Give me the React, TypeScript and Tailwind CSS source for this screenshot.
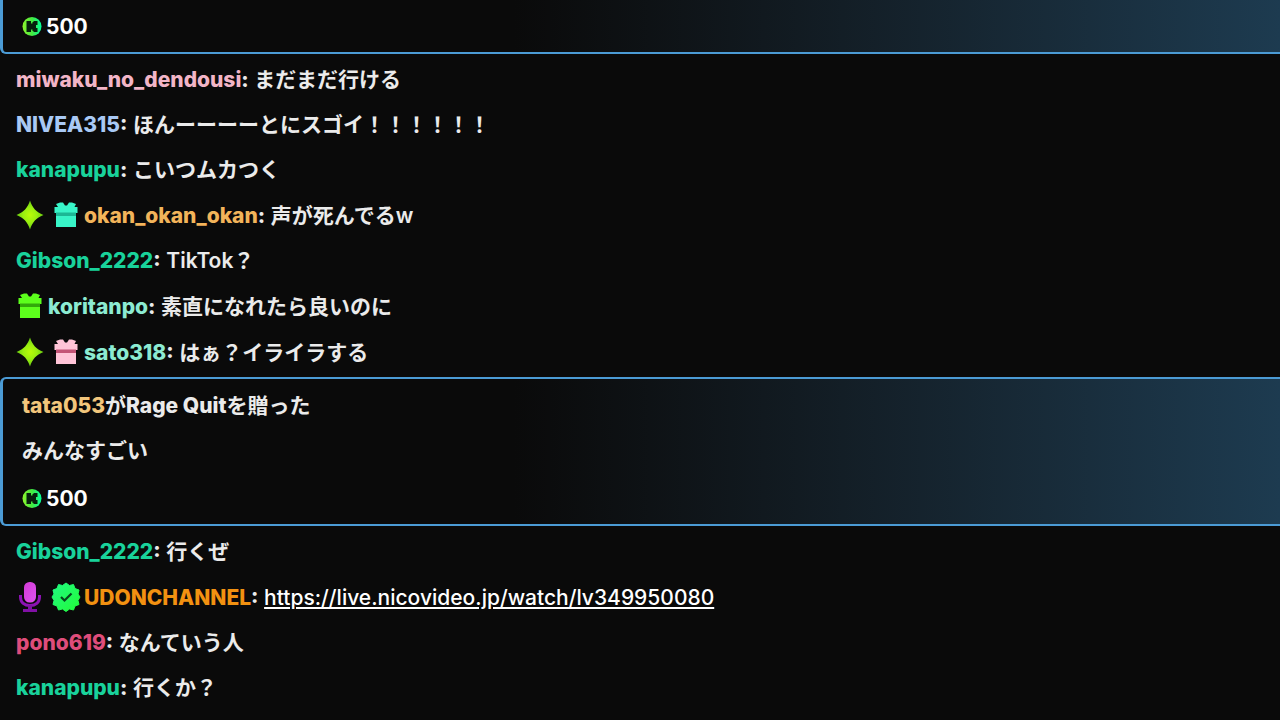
import type { ReactNode } from "react";

const FONT = "font-['Inter','Noto_Sans_CJK_JP',sans-serif]";

function Sparkle() {
  return (
    <svg viewBox="0 0 28 30" className="h-[30px] w-7 shrink-0" aria-hidden="true">
      <defs>
        <radialGradient id="sparkle">
          <stop offset="0" stopColor="#b9fb08" />
          <stop offset="0.5" stopColor="#9aee10" />
          <stop offset="1" stopColor="#66cc10" />
        </radialGradient>
      </defs>
      <path
        d="M14 0.5 C16.500 8 20 12 27.500 15 C20 18 16.500 22 14 29.500 C11.500 22 8 18 0.5 15 C8 12 11.500 8 14 0.5Z"
        fill="url(#sparkle)"
      />
    </svg>
  );
}

function Gift({ color, band }: { color: string; band: string }) {
  return (
    <svg viewBox="0 0 28 28" className="size-7 shrink-0" aria-hidden="true">
      <path d="M4 3 L8 1.500 H11 L13 4.500 H15 L17 1.500 H20 L24 3 L22.500 6 H25.500 V12 H2.500 V6 H6Z" fill={color} />
      <path d="M4 11.500 H24 V15 H4Z" fill={band} />
      <path d="M4 15 H24 V26 H4Z" fill={color} />
    </svg>
  );
}

function Mic() {
  return (
    <svg viewBox="0 0 28 32" className="h-8 w-7 shrink-0" aria-hidden="true">
      <defs>
        <linearGradient id="mic" x1="0" y1="0" x2="1" y2="1">
          <stop offset="0" stopColor="#d23bd6" />
          <stop offset="1" stopColor="#e052f0" />
        </linearGradient>
      </defs>
      <path d="M4.500 14 V16 C4.500 21.500 8.500 24.500 14 24.500 S23.500 21.500 23.500 16 V14" fill="none" stroke="#8d12b4" strokeWidth="3" />
      <path d="M12 24 H16 V28 H21 V31 H7 V28 H12Z" fill="#8110a5" />
      <rect x="8" y="1" width="12" height="20.500" rx="5.500" fill="url(#mic)" />
    </svg>
  );
}

function Verified() {
  return (
    <svg viewBox="0 0 30 30" className="-mx-px size-[30px] shrink-0" aria-hidden="true">
      <defs>
        <linearGradient id="verified" x1="0" y1="0" x2="1" y2="1">
          <stop offset="0" stopColor="#20fa83" />
          <stop offset="1" stopColor="#22fb37" />
        </linearGradient>
      </defs>
      <path
        d="M15 1 L18.500 3.500 L22.500 2.500 L24 6.500 L28 8 L27 12 L29 15 L27 18.500 L28 22.500 L24 24 L22.500 28 L18.500 27 L15 29.500 L11.500 27 L7.500 28 L6 24 L2 22.500 L3 18.500 L1 15 L3 12 L2 8 L6 6.500 L7.500 2.500 L11.500 3.500Z"
        fill="url(#verified)"
        stroke="url(#verified)"
        strokeLinejoin="round"
      />
      <path d="M10 15 L13.500 18.500 L20.500 11.500" fill="none" stroke="#06451d" strokeWidth="2.200" />
    </svg>
  );
}

function Coin() {
  return (
    <svg viewBox="0 0 20 20" className="size-5 shrink-0" aria-hidden="true">
      <defs>
        <linearGradient id="coin">
          <stop offset="0" stopColor="#8df52c" />
          <stop offset="0.5" stopColor="#45e941" />
          <stop offset="1" stopColor="#00ff9b" />
        </linearGradient>
      </defs>
      <circle cx="10" cy="9.500" r="9.500" fill="url(#coin)" />
      <path
        d="M4.500 4 H9 V6.500 H10.500 V5 H11.500 V4 H15.500 V8 H14 V11 H15.500 V15 H11.500 V14 H10.500 V12.500 H9 V15 H4.500Z"
        fill="#06200d"
      />
    </svg>
  );
}

interface MessageProps {
  name: string;
  color: string;
  badges?: ReactNode;
  children: ReactNode;
}

function Message({ name, color, badges, children }: MessageProps) {
  return (
    <li className={`flex items-center px-4 ${badges ? "min-h-[46px]" : "min-h-[45px]"}`}>
      {badges && <span className="mr-1 flex items-center gap-2">{badges}</span>}
      <p>
        <strong className={`font-extrabold ${color}`}>{name}</strong>
        <span className="mr-px font-extrabold">: </span>
        {children}
      </p>
    </li>
  );
}

function Amount({ value }: { value: number }) {
  return (
    <p className="flex items-center gap-1 font-bold text-white">
      <Coin />
      {value}
    </p>
  );
}

const CARD = "border-l-[3px] border-[#4b9bd5] bg-linear-to-r from-[#0a0a0a] from-40% to-[#1d3b50] px-[19px]";

export default function App() {
  return (
    <main
      className={`h-screen overflow-hidden bg-[#0a0a0a] text-[21px] leading-[33px] font-semibold text-[#ebebeb] ${FONT}`}
      lang="ja"
    >
      <ul>
        <li className={`mb-[3px] rounded-bl-md border-b-2 pt-[10px] pb-[9px] ${CARD}`}>
          <Amount value={500} />
        </li>
        <Message name="miwaku_no_dendousi" color="text-[#f2b5c7]">まだまだ行ける</Message>
        <Message name="NIVEA315" color="text-[#a9c9f5]">ほんーーーーとにスゴイ！！！！！！</Message>
        <Message name="kanapupu" color="text-[#19d29b]">こいつムカつく</Message>
        <Message
          name="okan_okan_okan"
          color="text-[#f2b45a]"
          badges={<><Sparkle /><Gift color="#38f5c8" band="#1cb895" /></>}
        >
          声が死んでるw
        </Message>
        <Message name="Gibson_2222" color="text-[#19d29b]">TikTok？</Message>
        <Message name="koritanpo" color="text-[#8cebd2]" badges={<Gift color="#5cff1c" band="#32a80b" />}>
          素直になれたら良いのに
        </Message>
        <Message
          name="sato318"
          color="text-[#8cebd2]"
          badges={<><Sparkle /><Gift color="#ffc4d7" band="#c45476" /></>}
        >
          はぁ？イライラする
        </Message>
        <li className={`mt-[2px] mb-[3px] rounded-l-md border-y-2 pt-1 pb-[9px] ${CARD}`}>
          <p className="py-[6px]">
            <strong className="font-extrabold text-[#f2c67c]">tata053</strong>が<strong className="font-extrabold">Rage Quit</strong>を贈った
          </p>
          <p className="py-[6px]">みんなすごい</p>
          <div className="pt-[9px]">
            <Amount value={500} />
          </div>
        </li>
        <Message name="Gibson_2222" color="text-[#19d29b]">行くぜ</Message>
        <Message name="UDONCHANNEL" color="text-[#f29111]" badges={<><Mic /><Verified /></>}>
          <a href="https://live.nicovideo.jp/watch/lv349950080" className="font-medium text-white underline">
            https://live.nicovideo.jp/watch/lv349950080
          </a>
        </Message>
        <Message name="pono619" color="text-[#df4d7b]">なんていう人</Message>
        <Message name="kanapupu" color="text-[#19d29b]">行くか？</Message>
      </ul>
    </main>
  );
}
